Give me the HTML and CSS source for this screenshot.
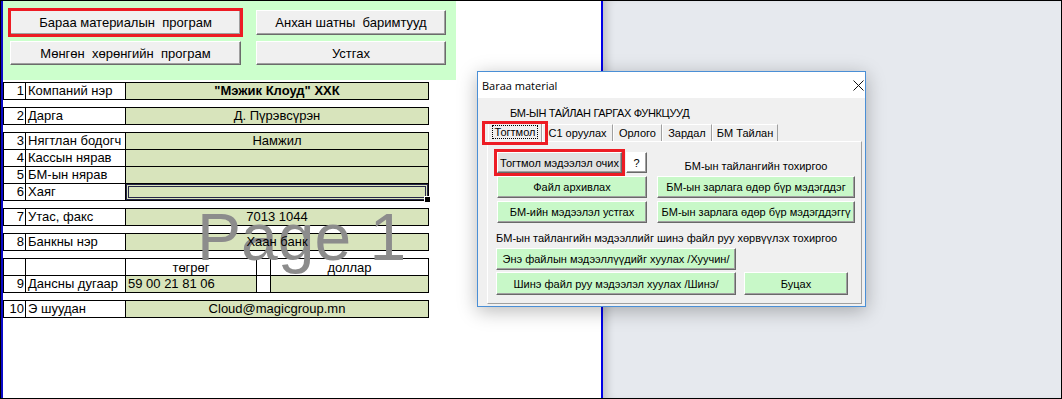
FILE: index.html
```html
<!DOCTYPE html>
<html>
<head>
<meta charset="utf-8">
<title>Baraa material</title>
<link rel="stylesheet" href="styles.css">
</head>
<body>
<div class="frame">
  <div class="sheet">
    <div class="panel">
      <button class="xbtn hl">Бараа материалын  програм</button>
      <button class="xbtn">Анхан шатны  баримтууд</button>
      <button class="xbtn">Мөнгөн  хөрөнгийн  програм</button>
      <button class="xbtn">Устгах</button>
    </div>
    <div class="table">
      <div class="block">
        <div class="c num"><span class="t">1</span></div><div class="c lbl"><span class="t">Компаний нэр</span></div><div class="c val bold"><span class="t">"Мэжик Клоуд" ХХК</span></div>
      </div>
      <div class="block">
        <div class="c num"><span class="t">2</span></div><div class="c lbl"><span class="t">Дарга</span></div><div class="c val"><span class="t">Д. Пүрэвсүрэн</span></div>
      </div>
      <div class="block">
        <div class="c num"><span class="t">3</span></div><div class="c lbl"><span class="t">Нягтлан бодогч</span></div><div class="c val"><span class="t">Намжил</span></div>
        <div class="c num"><span class="t">4</span></div><div class="c lbl"><span class="t">Кассын нярав</span></div><div class="c val"></div>
        <div class="c num"><span class="t">5</span></div><div class="c lbl"><span class="t">БМ-ын нярав</span></div><div class="c val"></div>
        <div class="c num"><span class="t">6</span></div><div class="c lbl"><span class="t">Хаяг</span></div><div class="c val selected"></div>
      </div>
      <div class="block">
        <div class="c num"><span class="t">7</span></div><div class="c lbl"><span class="t">Утас, факс</span></div><div class="c val"><span class="t">7013 1044</span></div>
      </div>
      <div class="block">
        <div class="c num"><span class="t">8</span></div><div class="c lbl"><span class="t">Банкны нэр</span></div><div class="c val"><span class="t">Хаан банк</span></div>
      </div>
      <div class="block">
        <div class="c num"></div><div class="c lbl"></div><div class="c head"><span class="t">төгрөг</span></div><div class="c"></div><div class="c head"><span class="t">доллар</span></div>
        <div class="c num"><span class="t">9</span></div><div class="c lbl"><span class="t">Дансны дугаар</span></div><div class="c green left"><span class="t">59 00 21 81 06</span></div><div class="c"></div><div class="c green"></div>
      </div>
      <div class="block">
        <div class="c num"><span class="t">10</span></div><div class="c lbl"><span class="t">Э шуудан</span></div><div class="c val"><span class="t">Cloud@magicgroup.mn</span></div>
      </div>
    </div>
    <div class="watermark">Page 1</div>
  </div>
  <div class="vline"></div>
  <div class="desk"></div>

  <div class="dialog">
    <div class="titlebar">
      <span class="ttl">Baraa material</span>
      <svg class="close" width="11" height="11" viewBox="0 0 11 11"><path d="M0.5 0.5L10.5 10.5M10.5 0.5L0.5 10.5" stroke="#111" stroke-width="1" fill="none"/></svg>
    </div>
    <div class="client">
      <div class="heading">БМ-ЫН ТАЙЛАН ГАРГАХ ФУНКЦУУД</div>
      <div class="tabs">
        <div class="tab sel w1"><span class="focus">Тогтмол</span></div>
        <div class="tab w2">С1 оруулах</div>
        <div class="tab w3">Орлого</div>
        <div class="tab w4">Зардал</div>
        <div class="tab w5">БМ Тайлан</div>
      </div>
      <div class="page">
        <div class="grid2">
          <div class="toprow">
            <button class="wbtn gray hl2">Тогтмол мэдээлэл очих</button>
            <button class="wbtn white">?</button>
          </div>
          <div class="lbl2">БМ-ын тайлангийн тохиргоо</div>
          <button class="wbtn green">Файл архивлах</button>
          <button class="wbtn green">БМ-ын зарлага өдөр бүр мэдэгддэг</button>
          <button class="wbtn green">БМ-ийн мэдээлэл устгах</button>
          <button class="wbtn green">БМ-ын зарлага өдөр бүр мэдэгддэггү</button>
        </div>
        <div class="lbl3">БМ-ын тайлангийн мэдээллийг шинэ файл руу хөрвүүлэх тохиргоо</div>
        <div class="grid3">
          <button class="wbtn green">Энэ файлын мэдээллүүдийг хуулах /Хуучин/</button>
          <span></span>
          <button class="wbtn green">Шинэ файл руу мэдээлэл хуулах /Шинэ/</button>
          <button class="wbtn green">Буцах</button>
        </div>
      </div>
    </div>
  </div>
</div>
</body>
</html>
```

FILE: styles.css
```css
* { box-sizing: border-box; }
html, body { margin: 0; padding: 0; background: #fff; }
body {
  width: 1062px;
  height: 399px;
  overflow: hidden;
  font-family: "Liberation Sans", Arial, sans-serif;
  color: #000;
}
.frame {
  position: relative;
  width: 1062px;
  height: 399px;
  border: 1px solid #000;
  display: flex;
}
.sheet {
  position: relative;
  flex: none;
  width: 600px;
  border-left: 2px solid #0a0ac8;
  background: #fff;
}
.vline { flex: none; width: 2px; background: #0000e6; }
.desk {
  flex: 1;
  background: #e6e9ee;
  box-shadow: inset 9px 0 8px -5px rgba(0, 0, 0, 0.18);
}

/* top green panel */
.panel {
  width: 453px;
  height: 79px;
  background: #ccffcc;
  display: grid;
  grid-template-columns: 231px 190px;
  grid-template-rows: 25px 24px;
  column-gap: 15px;
  row-gap: 6px;
  padding: 9px 0 0 7px;
}
.xbtn {
  font-family: "Liberation Sans", Arial, sans-serif;
  font-size: 13px;
  color: #000;
  white-space: pre;
  padding: 0;
  background: #f0f0f0;
  border: 1px solid;
  border-color: #fff #6b6b6b #6b6b6b #fff;
  box-shadow: inset -1px -1px 0 #a0a0a0;
}
.xbtn.hl { outline: 3px solid #ed1c24; outline-offset: -1px; }

/* sheet table */
.table { margin-top: 2px; }
.block {
  display: grid;
  grid-template-columns: 22px 100px 131px 14px 158px;
  width: max-content;
  border-top: 1px solid #000;
  border-left: 1px solid #000;
  margin-bottom: 7px;
}
.c {
  height: 17px;
  border-right: 1px solid #000;
  border-bottom: 1px solid #000;
  font-size: 13px;
  line-height: 16px;
  padding: 0 2px;
  white-space: nowrap;
  overflow: visible;
}
.t { position: relative; z-index: 2; }
.num { text-align: right; padding: 0 1px 0 0; }
.lbl { padding-left: 2px; }
.val { grid-column: span 3; background: #d8e4bc; text-align: center; }
.bold { font-weight: bold; }
.green { background: #d8e4bc; }
.left { text-align: left; }
.head { text-align: center; line-height: 18px; }
.selected {
  position: relative;
  box-shadow: inset 0 0 0 1px #26264a, inset 0 0 0 2px #d8e4bc, inset 0 0 0 3px #26264a;
}
.selected::after {
  content: "";
  position: absolute;
  right: -3px;
  bottom: -3px;
  width: 5px;
  height: 5px;
  background: #000;
  border: 1px solid #fff;
}
.watermark {
  position: absolute;
  z-index: 1;
  left: 194px;
  top: 203px;
  font-size: 66px;
  line-height: 66px;
  color: #8c8c8c;
  pointer-events: none;
  white-space: nowrap;
}

/* dialog window */
.dialog {
  position: absolute;
  z-index: 5;
  left: 476px;
  top: 70px;
  width: 389px;
  height: 236px;
  border: 1px solid #4a8fd6;
  background: #f0f0f0;
  box-shadow: 0 4px 18px rgba(0, 0, 0, 0.28);
  font-family: "Liberation Sans", Arial, sans-serif;
  font-size: 11px;
}
.titlebar {
  height: 26px;
  background: #fff;
  display: flex;
  align-items: center;
  padding-left: 4px;
}
.ttl { font-family: "Open Sans", "Noto Sans", sans-serif; font-size: 11px; color: #000; }
.close { margin-left: auto; margin-right: 1px; }
.client { padding: 8px 0 0 9px; }
.heading { margin-left: 23px; height: 14px; line-height: 14px; letter-spacing: -0.35px; }
.tabs {
  margin-top: 2px;
  margin-left: 1px;
  height: 19px;
  display: flex;
  align-items: flex-end;
  position: relative;
  z-index: 1;
}
.tab {
  height: 17px;
  line-height: 16px;
  text-align: center;
  background: #f0f0f0;
  border: 1px solid;
  border-color: #fff #a0a0a0 transparent #fff;
  border-bottom: none;
}
.tab.sel { position: relative; height: 20px; margin-bottom: -1px; line-height: 18px; }
.tab.sel::after {
  content: "";
  position: absolute;
  left: -7px;
  right: -7px;
  top: -2px;
  bottom: -3px;
  border: 3px solid #ed1c24;
}
.focus { outline: 1px dotted #000; padding: 0 2px; }
.w1 { width: 54px; }
.w2 { width: 71px; }
.w3 { width: 49px; }
.w4 { width: 50px; }
.w5 { width: 66px; }
.page {
  width: 375px;
  height: 163px;
  border: 1px solid;
  border-color: #fff #a0a0a0 #a0a0a0 #fff;
  padding: 10px 0 0 9px;
}
.grid2 {
  display: grid;
  grid-template-columns: 150px 198px;
  grid-template-rows: 21px 22px 22px;
  column-gap: 10px;
  row-gap: 3px;
}
.toprow { display: flex; gap: 4px; }
.toprow .gray { width: 125px; }
.toprow .white { width: 21px; }
.lbl2 { text-align: center; line-height: 28px; }
.wbtn {
  font-family: "Liberation Sans", Arial, sans-serif;
  font-size: 11px;
  color: #000;
  padding: 0;
  white-space: nowrap;
  border: 1px solid;
  border-color: #fff #696969 #696969 #fff;
  box-shadow: inset -1px -1px 0 #a0a0a0;
}
.wbtn.green { background: #c8f8c8; }
.wbtn.gray { background: #e1e1e1; }
.wbtn.white { background: #fff; }
.hl2 { outline: 3px solid #ed1c24; outline-offset: 0; }
.lbl3 { margin-top: 8px; height: 14px; line-height: 14px; margin-left: -1px; }
.grid3 {
  margin-top: 3px;
  margin-left: -1px;
  display: grid;
  grid-template-columns: 240px 104px;
  grid-template-rows: 22px 23px;
  column-gap: 8px;
  row-gap: 2px;
}
```
